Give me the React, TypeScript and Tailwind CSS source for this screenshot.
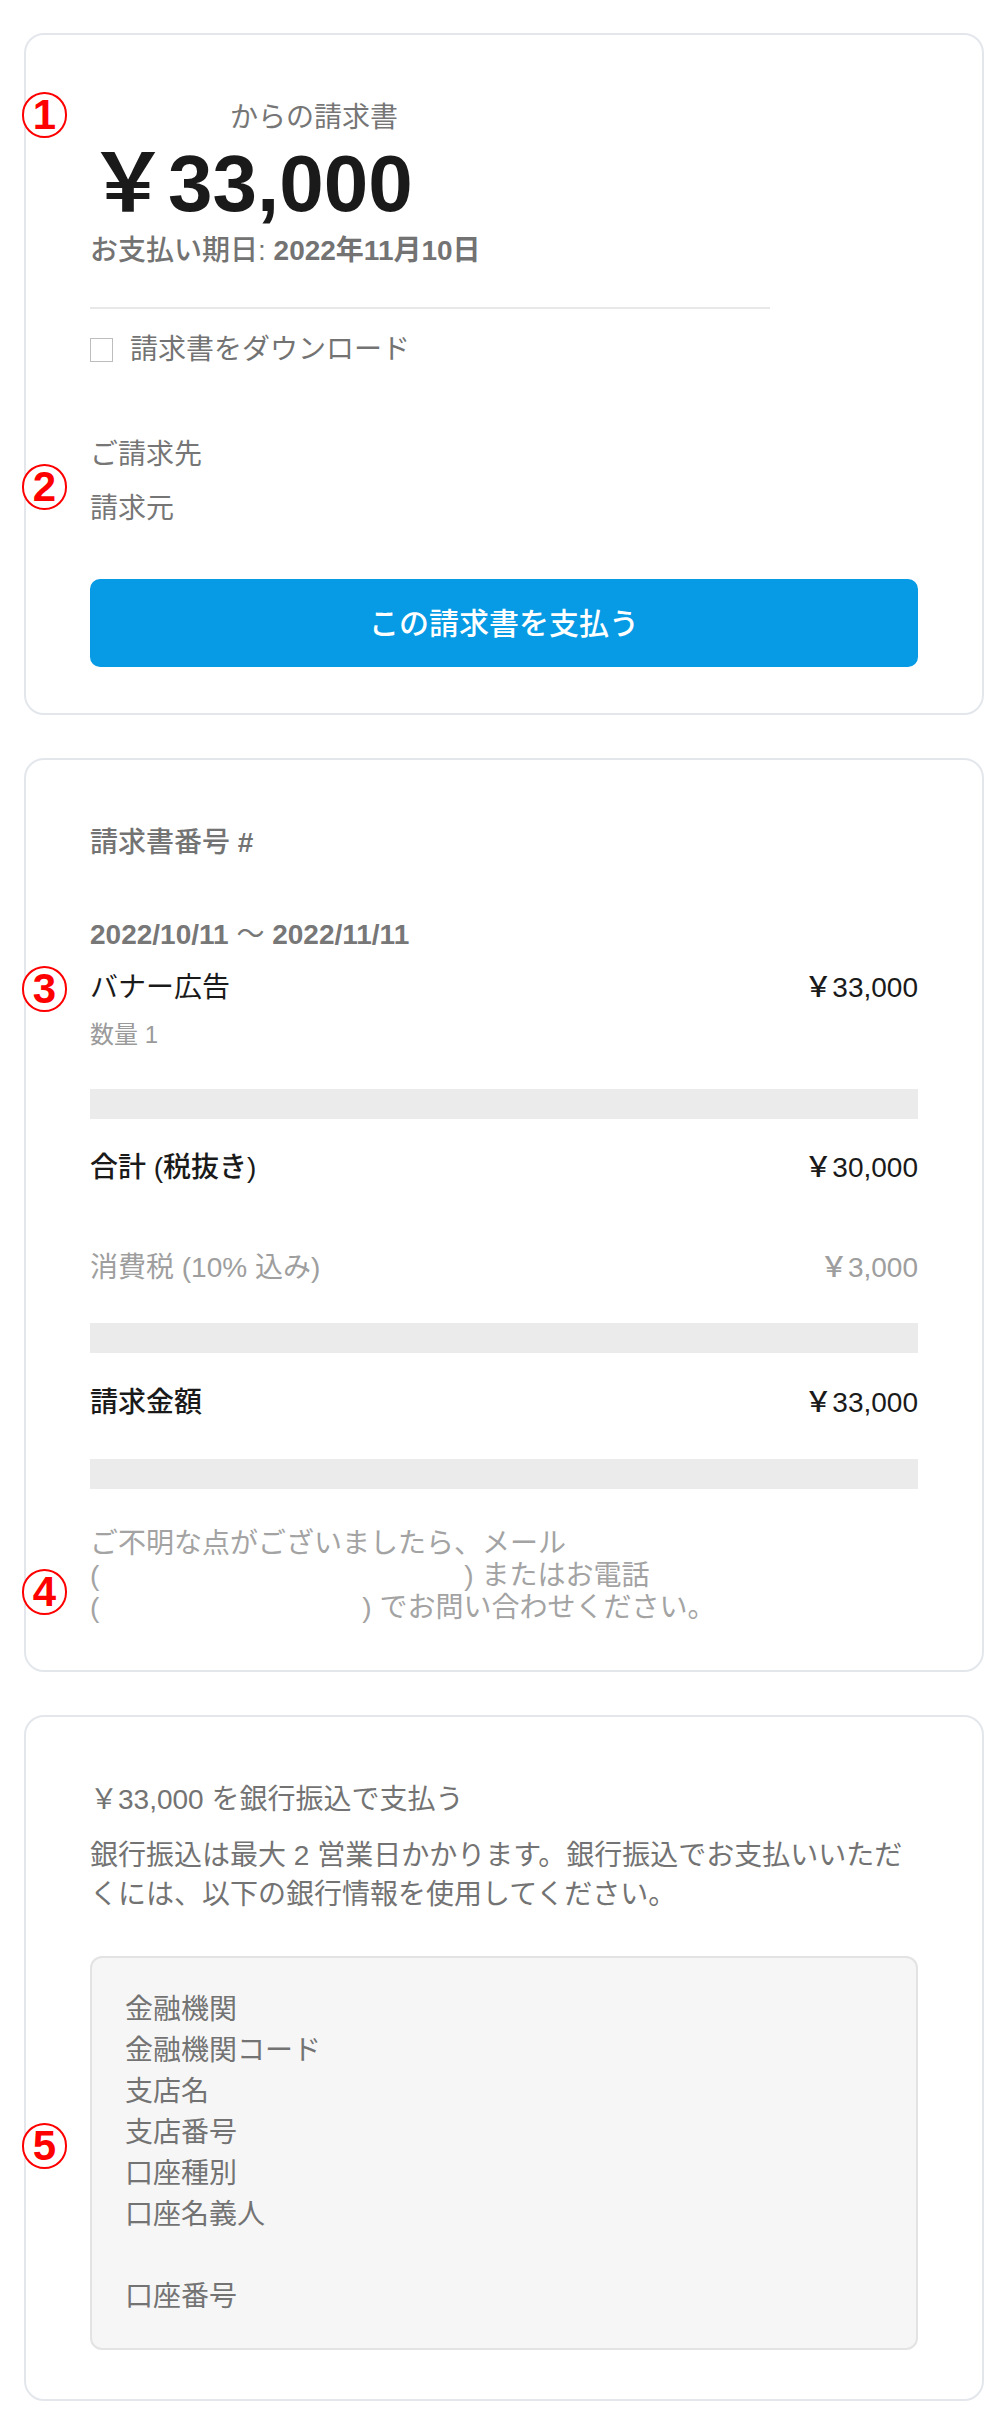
import React from 'react'

const font = "font-['Liberation_Sans','Noto_Sans_CJK_JP',sans-serif]"

interface badgeProps {
  n: string;
  className: string;
}

// red circled number laid over the left edge of the cards
const Badge: React.FC<badgeProps> = ({ n, className }) => (
  <div
    className={
      'absolute left-[22px] w-[45px] h-[46px] rounded-full border-2 border-[#ff0000] bg-white flex items-center justify-center text-[#ff0000] text-[42px] leading-none font-bold ' +
      className
    }
  >
    {n}
  </div>
)

interface rowProps {
  label: string;
  amount: string;
  className: string;
}

const Row: React.FC<rowProps> = ({ label, amount, className }) => (
  <div className={'flex justify-between text-[28px] leading-[40px] ' + className}>
    <span>{label}</span>
    <span className="font-medium">{amount}</span>
  </div>
)

const Bar = ({ className }: { className: string }) => (
  <div className={'h-[30px] bg-[#ebebeb] ' + className} />
)

const InvoiceHeader = () => (
  <div className="rounded-[20px] border-2 border-[#e3e7ec] bg-white px-[64px] pt-[63px] pb-[46px]">
    <p className="text-[28px] leading-[40px] text-[#767676]">
      <span className="inline-block w-[140px]" />
      からの請求書
    </p>
    <p className="mt-[6px] -ml-[2px] text-[80px] leading-[80px] font-bold text-[#1a1a1a]">￥33,000</p>
    <p className="mt-[7px] text-[28px] leading-[40px] font-medium text-[#737373]">
      お支払い期日: <span className="font-semibold">2022年11月10日</span>
    </p>
    <div className="mt-[36px] h-[2px] w-[680px] bg-[#e8e8e8]" />
    <label className="mt-[21px] flex h-[40px] items-center gap-[17px]">
      <span className="h-[24px] w-[23px] border-[1.5px] border-[#bdbdbd] bg-white" />
      <span className="text-[28px] leading-[40px] text-[#737373]">請求書をダウンロード</span>
    </label>
    <p className="mt-[65px] text-[28px] leading-[40px] text-[#767676]">ご請求先</p>
    <p className="mt-[14px] text-[28px] leading-[40px] text-[#767676]">請求元</p>
    <button className="mt-[50px] h-[88px] w-full rounded-[10px] bg-[#069be4] text-[30px] font-medium text-white">
      この請求書を支払う
    </button>
  </div>
)

const InvoiceDetail = () => (
  <div className="rounded-[20px] border-2 border-[#e3e7ec] bg-white px-[64px] pt-[63px] pb-[46px]">
    <p className="text-[28px] leading-[40px] font-medium text-[#737373]">
      請求書番号 <span className="font-semibold">#</span>
    </p>
    <p className="mt-[52px] text-[28px] leading-[40px] font-semibold text-[#777777]">
      2022/10/11 <span className="font-normal">〜</span> 2022/11/11
    </p>
    <Row className="mt-[13px] text-[#1a1a1a]" label="バナー広告" amount="￥33,000" />
    <p className="mt-[11px] text-[24px] leading-[32px] text-[#9a9a9a]">数量 1</p>
    <Bar className="mt-[38px]" />
    <Row className="mt-[29px] font-medium text-[#1a1a1a]" label="合計 (税抜き)" amount="￥30,000" />
    <Row className="mt-[60px] text-[#9e9e9e]" label="消費税 (10% 込み)" amount="￥3,000" />
    <Bar className="mt-[35px]" />
    <Row className="mt-[30px] font-medium text-[#1a1a1a]" label="請求金額" amount="￥33,000" />
    <Bar className="mt-[36px]" />
    <p className="mt-[39px] text-[28px] leading-[32px] text-[#a3a3a3]">
      ご不明な点がございましたら、メール
      <br />
      (<span className="inline-block w-[365px]" />) またはお電話
      <br />
      (<span className="inline-block w-[263px]" />) でお問い合わせください。
    </p>
  </div>
)

const bankRows = ['金融機関', '金融機関コード', '支店名', '支店番号', '口座種別', '口座名義人', '', '口座番号']

const BankTransfer = () => (
  <div className="rounded-[20px] border-2 border-[#e3e7ec] bg-white px-[64px] pt-[63px] pb-[49px]">
    <p className="text-[28px] leading-[40px] text-[#737373]">￥33,000 を銀行振込で支払う</p>
    <p className="mt-[16px] text-[28px] leading-[39px] text-[#737373]">
      銀行振込は最大 2 営業日かかります。銀行振込でお支払いいただくには、以下の銀行情報を使用してください。
    </p>
    <div className="mt-[42px] rounded-[12px] border-2 border-[#e3e3e3] bg-[#f6f6f6] pl-[33px] pt-[31px] pb-[31px] text-[28px] leading-[41px] text-[#737373]">
      {bankRows.map((r, i) => (
        <p key={i} className="h-[41px]">
          {r}
        </p>
      ))}
    </div>
  </div>
)

export default function App() {
  return (
    <div className={'relative min-h-[2428px] bg-white pt-[33px] pb-[27px] ' + font}>
      <div className="ml-[24px] flex w-[960px] flex-col gap-[43px]">
        <InvoiceHeader />
        <InvoiceDetail />
        <BankTransfer />
      </div>

      <Badge n="1" className="top-[92px]" />
      <Badge n="2" className="top-[464px]" />
      <Badge n="3" className="top-[966px]" />
      <Badge n="4" className="top-[1569px]" />
      <Badge n="5" className="top-[2123px]" />
    </div>
  )
}
